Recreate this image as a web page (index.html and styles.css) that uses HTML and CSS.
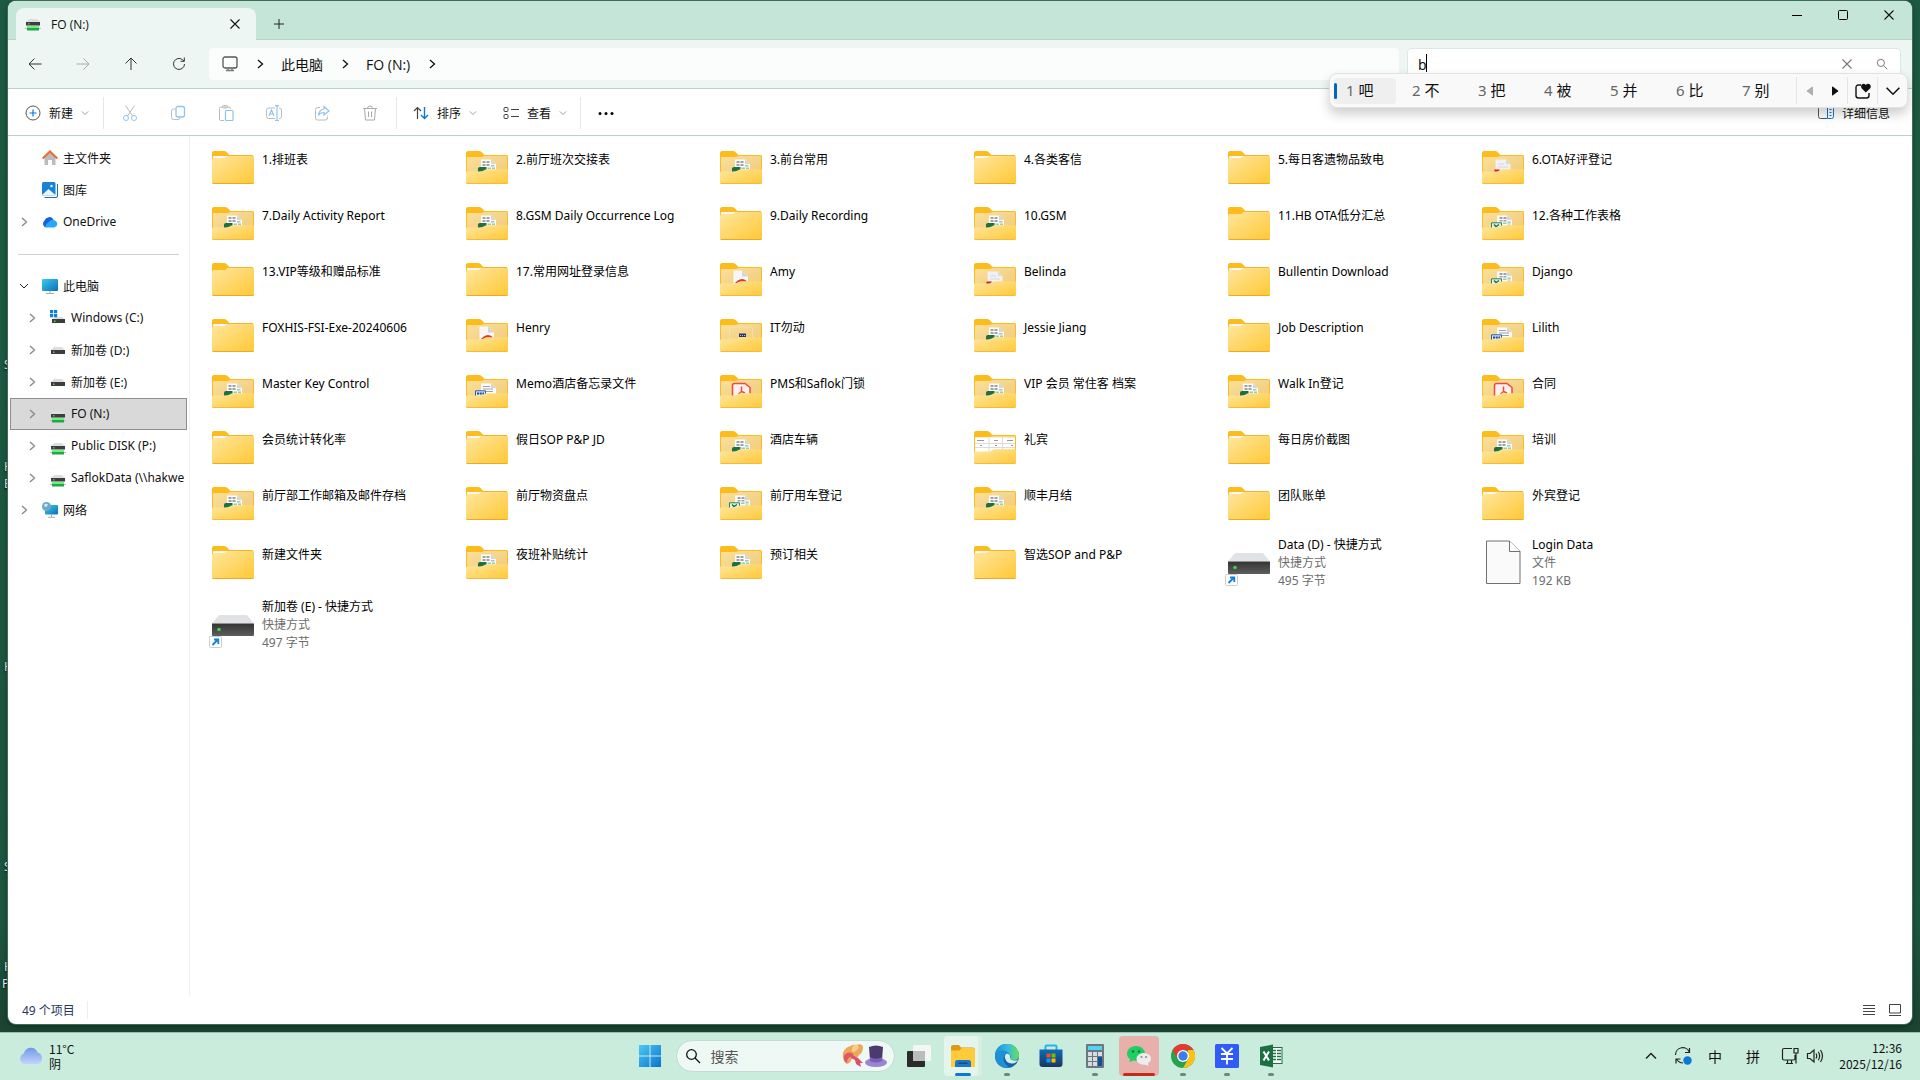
FILE: index.html
```html
<!DOCTYPE html>
<html lang="zh-CN">
<head>
    <meta charset="UTF-8">
    <meta name="viewport" content="width=device-width, initial-scale=1.0">
    <title>FO (N:)</title>
    <link rel="stylesheet" href="styles.css">
</head>
<body>
    <!-- Iconos compartidos -->
    <svg class="sprite" width="0" height="0" aria-hidden="true">
        <defs>
            <linearGradient id="gFolder" x1="0" y1="0" x2="1" y2="1">
                <stop offset="0" stop-color="#ffe79f"/><stop offset="1" stop-color="#ffc835"/>
            </linearGradient>
            <linearGradient id="gBack" x1="0" y1="0" x2="1" y2="1">
                <stop offset="0" stop-color="#fbdf9a"/><stop offset="1" stop-color="#efcb7c"/>
            </linearGradient>
            <linearGradient id="gDrive" x1="0" y1="0" x2="0" y2="1">
                <stop offset="0" stop-color="#333"/><stop offset="1" stop-color="#5e5e5e"/>
            </linearGradient>
            <linearGradient id="gBlue" x1="0" y1="0" x2="1" y2="1">
                <stop offset="0" stop-color="#35d0e8"/><stop offset="1" stop-color="#0f6cbd"/>
            </linearGradient>
            <linearGradient id="gWin" x1="0" y1="0" x2="1" y2="1">
                <stop offset="0" stop-color="#4cc8f5"/><stop offset="1" stop-color="#0a72d0"/>
            </linearGradient>
            <linearGradient id="gCloud" x1="0" y1="0" x2="0" y2="1">
                <stop offset="0" stop-color="#6f9be8"/><stop offset="1" stop-color="#c3d4fa"/>
            </linearGradient>
            <linearGradient id="gEdge" x1="0" y1="0" x2="1" y2="0">
                <stop offset="0" stop-color="#1c8fd8"/><stop offset=".55" stop-color="#35bde0"/><stop offset="1" stop-color="#6be04d"/>
            </linearGradient>
            <linearGradient id="gStore" x1="0" y1="0" x2="0" y2="1">
                <stop offset="0" stop-color="#0c6cb8"/><stop offset="1" stop-color="#1b3560"/>
            </linearGradient>
            <g id="back">
                <path d="M0 32V2Q0 0 2 0H13Q14.500 0 15.500 1L18.500 4H40.500Q42 4 42 5.500V32Z" fill="#fbbc1c"/>
                <path d="M1 7Q1 6 2 6H16Q18 5 19 5H40.500Q41 5 41 6V24H1Z" fill="url(#gBack)"/>
            </g>
            <g id="front">
                <path d="M0 21.500Q0 20.500 1 20.500H14Q16 20.500 17.500 19.500Q19.500 18.300 21.500 18.300H41Q42 18.300 42 19.500V31.500Q42 33 40.500 33H1.500Q0 33 0 31.500Z" fill="url(#gFolder)"/>
                <path d="M.7 32.500H41.300" stroke="#f0bb3f"/>
            </g>
            <g id="body">
                <path d="M0 20V2Q0 0 2 0H12Q13.500 0 14.500 1L17.500 4H30V20Z" fill="#fbbc1c"/>
                <path d="M0 9Q0 7 2 7H12Q14 7 15 5.500Q16 4.500 18 4.500H40.500Q42 4.500 42 6V31.500Q42 33 40.500 33H1.500Q0 33 0 31.500Z" fill="url(#gFolder)"/>
                <path d="M.7 32.500H41.300" stroke="#efa920"/><path d="M17 4.500H41" stroke="#efb530"/>
            </g>
            <g id="sheet">
                <path d="M15 8.500H25L30 13V22H15Z" fill="#fbfbfb"/><path d="M25 8.500L30 13H25Z" fill="#d5d5d5"/>
            </g>
        </defs>
        <symbol id="f-bare" viewBox="0 0 42 33"><use href="#body"/></symbol>
        <symbol id="f-plain" viewBox="0 0 42 33">
            <use href="#body"/><path d="M1 7.500V6Q1 5 2 5H15.500L14.500 6.200Q13.800 7 12 7H3Z" fill="#f4f6f8"/>
        </symbol>
        <symbol id="f-xls" viewBox="0 0 42 33">
            <use href="#back"/><use href="#sheet"/>
            <path d="M16.500 10h3v2h-3zM20.500 10h3v2h-3zM16.500 13h3v2h-3zM20.500 13h3v2h-3z" fill="#a2a2a2"/>
            <path d="M25 14h3.500v1.500H25zM21.500 16.500H25v1.500h-3.500zM26 16.500h3v1.500h-3z" fill="#9ccbb0"/>
            <path d="M12 21V17.500Q12 16 14 16H20.500V20Z" fill="#1d7044"/><use href="#front"/>
        </symbol>
        <symbol id="f-xls2" viewBox="0 0 42 33">
            <use href="#back"/><use href="#sheet"/>
            <path d="M17.500 10h3v2h-3zM21.500 10h3v2h-3zM17.500 13h3v1.500h-3zM21.500 13h3v1.500h-3z" fill="#a2a2a2"/>
            <path d="M21 15.500h3.500v1.500H21zM25.500 14.500h3v2h-3zM25.500 17.500h3v1h-3z" fill="#9ccbb0"/>
            <path d="M9.500 22V15.800H19.500V22" fill="#e6f3ec" stroke="#2d8257"/><path d="M12 17.500L14 19.500L17 17.500" fill="none" stroke="#1d7044" stroke-width="1.500"/>
            <use href="#front"/>
        </symbol>
        <symbol id="f-word" viewBox="0 0 42 33">
            <use href="#back"/><use href="#sheet"/>
            <path d="M17 11.500h7M17 14h10M19 16.500h8" stroke="#9aa3b1"/>
            <path d="M9.500 22V15.800H19.500V22" fill="#dbe7f7" stroke="#2b5aa8"/><path d="M11 18.500H18" stroke="#1d4a98" stroke-width="2" stroke-dasharray="2 .7"/>
            <use href="#front"/>
        </symbol>
        <symbol id="f-pdf" viewBox="0 0 42 33">
            <use href="#back"/><path d="M13.500 7.500H22L28 13.500V22H13.500Z" fill="#f7f7f7"/><path d="M22 7.500L28 13.500H22Z" fill="#d4d4d4"/>
            <path d="M16 20.500Q21 15 26 19" fill="none" stroke="#dc3a2f" stroke-width="2.500"/><use href="#front"/>
        </symbol>
        <symbol id="f-red" viewBox="0 0 42 33">
            <use href="#back"/><path d="M13.500 8.500H24L28.500 13V22H13.500Z" fill="#f1f1f4"/><path d="M24 8.500L28.500 13H24ZM16 12.500h6v1h-6zM16 15.500h10v1H16z" fill="#dadade"/>
            <path d="M12.500 21V18.500H18L16.500 21Z" fill="#d3202a"/><use href="#front"/>
        </symbol>
        <symbol id="f-adobe" viewBox="0 0 42 33">
            <use href="#back"/><path d="M12.500 22V10.500Q12.500 8.500 14.500 8.500H25L30 12.500V22" fill="#fff1ef" stroke="#ef4a3c" stroke-width="1.500"/>
            <path d="M21.500 11.500V16.500L25 18M21.500 16.500L18.500 19" fill="none" stroke="#ef4a3c" stroke-width="1.500"/><use href="#front"/>
        </symbol>
        <symbol id="f-it" viewBox="0 0 42 33">
            <use href="#back"/><path d="M9.500 8H32.500V20H9.500Z" fill="none" stroke="#f7dfa6"/><path d="M19 14.500H26V18H19Z" fill="#26366e"/><path d="M20 16.500h5" stroke="#b9c3e6" stroke-dasharray="1 1"/><use href="#front"/>
        </symbol>
        <symbol id="f-table" viewBox="0 0 42 33">
            <use href="#back"/><path d="M1 6.500H41V22H1Z" fill="#fff"/>
            <path d="M1 12.500H41M1 16.500H41M15 6.500V20M28.500 6.500V20" stroke="#dcdcde"/>
            <path d="M3 9.500h7M20 9.500h4M33 9.500h6M6 14.500h2M21 14.500h2M37 14.500h2" stroke="#999"/><use href="#front"/>
        </symbol>
        <symbol id="f-drive" viewBox="0 0 45 34">
            <path d="M10 1H38L45 9.500H3Z" fill="#e0e2e6"/><path d="M3 9.500H45V21Q45 22 44 22H4Q3 22 3 21Z" fill="url(#gDrive)"/>
            <circle cx="10" cy="15.500" r="1.800" fill="#3fd83a"/>
            <rect x=".5" y="22.500" width="12" height="11" rx="1" fill="#fff" stroke="#c8ced6"/>
            <path d="M3.500 31L9 25.500M5 25.500H9.300V30" fill="none" stroke="#1580d8" stroke-width="1.800"/>
        </symbol>
        <symbol id="f-file" viewBox="0 0 42 45">
            <path d="M4.500 1H27.500L38 11.500V43.500H4.500Z" fill="#fafafa" stroke="#707070"/><path d="M27.500 1V11.500H38" fill="#fff" stroke="#707070"/>
        </symbol>
        <symbol id="s-drive" viewBox="0 0 16 16">
            <path d="M4 5H12L15 8H1Z" fill="#dcdee2"/><rect x="1" y="8" width="14" height="4" fill="#3d3d3d"/><rect x="3" y="9.500" width="1.500" height="1.500" fill="#46e03e"/>
        </symbol>
        <symbol id="s-net" viewBox="0 0 16 16">
            <path d="M4 3H12L15 6H1Z" fill="#dcdee2"/><rect x="1" y="6" width="14" height="3.500" fill="#3d3d3d"/><rect x="3" y="7.200" width="1.500" height="1.200" fill="#46e03e"/>
            <path d="M0 12.500H16" stroke="#b9c4bd"/><rect x="2" y="10" width="12" height="2.500" fill="#6ff07a"/><rect x="2" y="12" width="12" height="2.500" fill="#22a648"/>
        </symbol>
        <symbol id="chev" viewBox="0 0 10 10"><path d="M3 1L7.500 5L3 9" fill="none" stroke="currentColor" stroke-width="1.300"/></symbol>
        <symbol id="down" viewBox="0 0 10 10"><path d="M1 3L5 7L9 3" fill="none" stroke="currentColor"/></symbol>
        <symbol id="cross" viewBox="0 0 12 12"><path d="M1.500 1.500L10.500 10.500M10.500 1.500L1.500 10.500" fill="none" stroke="currentColor" stroke-width="1.100"/></symbol>
        <symbol id="lens" viewBox="0 0 16 16"><g fill="none" stroke="currentColor" stroke-width="1.300"><circle cx="6.500" cy="6.500" r="4.800"/><path d="M10 10L15 15"/></g></symbol>
    </svg>

    <main class="desktop">
        <span class="desk-label label-1">S</span>
        <span class="desk-label label-2">H</span>
        <span class="desk-label label-3">E</span>
        <span class="desk-label label-4">H</span>
        <span class="desk-label label-5">S</span>
        <span class="desk-label label-6">H</span>
        <span class="desk-label label-7">P</span>

        <section class="window">
            <header class="titlebar">
                <div class="tab">
                    <svg class="icon16"><use href="#s-net"/></svg>
                    <span class="tab-title">FO (N:)</span>
                    <button class="tab-close" aria-label="关闭标签页"><svg class="icon12"><use href="#cross"/></svg></button>
                </div>
                <button class="tab-new" aria-label="新建标签页"><svg class="icon12" viewBox="0 0 12 12"><path d="M6 1V11M1 6H11" stroke="#222"/></svg></button>
                <div class="controls">
                    <button aria-label="最小化"><svg class="icon12" viewBox="0 0 12 12"><path d="M1 6.500H11" stroke="#000"/></svg></button>
                    <button aria-label="最大化"><svg class="icon12" viewBox="0 0 12 12"><rect x="1.500" y="1.500" width="9" height="9" rx="1" fill="none" stroke="#000"/></svg></button>
                    <button aria-label="关闭"><svg class="icon12"><use href="#cross"/></svg></button>
                </div>
            </header>

            <nav class="navbar">
                <button aria-label="后退"><svg class="icon16" viewBox="0 0 16 16"><path d="M14.500 8H2M7.500 2.500L2 8L7.500 13.500" fill="none" stroke="#333"/></svg></button>
                <button aria-label="前进"><svg class="icon16" viewBox="0 0 16 16"><path d="M1.500 8H14M8.500 2.500L14 8L8.500 13.500" fill="none" stroke="#aaa"/></svg></button>
                <button aria-label="向上"><svg class="icon16" viewBox="0 0 16 16"><path d="M8 14V2M2.500 7.500L8 2L13.500 7.500" fill="none" stroke="#333"/></svg></button>
                <button aria-label="刷新"><svg class="icon16" viewBox="0 0 16 16"><path d="M13.500 8A5.500 5.500 0 1 1 11.500 3.700L13.200 5.200M13.300 1.500V5.300H9.500" fill="none" stroke="#333"/></svg></button>
                <div class="address">
                    <svg class="icon16" viewBox="0 0 16 16"><rect x="1" y="1" width="14" height="11" rx="2" fill="none" stroke="#555" stroke-width="1.300"/><path d="M4 14.500H12M6 12V14M10 12V14" stroke="#777" stroke-width="1.300"/></svg>
                    <svg class="crumb-chev"><use href="#chev"/></svg>
                    <a href="#">此电脑</a>
                    <svg class="crumb-chev"><use href="#chev"/></svg>
                    <a href="#">FO (N:)</a>
                    <svg class="crumb-chev"><use href="#chev"/></svg>
                </div>
                <div class="search">
                    <input type="text" value="b" aria-label="搜索 FO (N:)">
                    <span class="caret"></span>
                    <button aria-label="清除"><svg class="icon12"><use href="#cross"/></svg></button>
                    <button aria-label="搜索"><svg class="icon12"><use href="#lens"/></svg></button>
                </div>
            </nav>

            <div class="toolbar">
                <button class="cmd cmd-new"><svg class="icon16" viewBox="0 0 16 16"><circle cx="8" cy="8" r="7" fill="none" stroke="#555"/><path d="M8 4.500V11.500M4.500 8H11.500" stroke="#0a78d6" stroke-width="1.200"/></svg>新建<svg class="arrow"><use href="#down"/></svg></button>
                <span class="divider"></span>
                <div class="tools">
                    <button class="tool" aria-label="剪切"><svg class="icon16" viewBox="0 0 16 16" fill="none"><path d="M3.500 0.500L10.500 11M12.500 0.500L5.500 11" stroke="#bbb"/><circle cx="4" cy="13" r="2.500" stroke="#8fc4ee"/><circle cx="12" cy="13" r="2.500" stroke="#8fc4ee"/></svg></button>
                    <button class="tool" aria-label="复制"><svg class="icon16" viewBox="0 0 16 16" fill="none"><path d="M5 4H3.500Q1.500 4 1.500 6V12.500Q1.500 14.500 3.500 14.500H8Q10 14.500 10 12.500" stroke="#bbb"/><rect x="6" y="1.500" width="8.500" height="10.500" rx="2" stroke="#8fc4ee" stroke-width="1.300"/></svg></button>
                    <button class="tool" aria-label="粘贴"><svg class="icon16" viewBox="0 0 16 16" fill="none"><path d="M6 15.500H3Q1.500 15.500 1.500 14V3.500Q1.500 2 3 2H11Q12.500 2 12.500 3.500V4" stroke="#bbb"/><rect x="4.500" y=".5" width="5" height="2.500" rx="1" stroke="#bbb"/><rect x="7.500" y="5.500" width="7.500" height="10" rx="1" stroke="#8fc4ee" stroke-width="1.200"/></svg></button>
                    <button class="tool" aria-label="重命名"><svg class="icon16" viewBox="0 0 16 16" fill="none"><path d="M9 3H2.500Q.5 3 .5 5V11.500Q.5 13.500 2.500 13.500H9M13 3Q15.500 3 15.500 5V11.500Q15.500 13.500 13 13.500" stroke="#bbb"/><path d="M11 1V15.500M9 .7H13M9 15.500H13M3 11L5.500 5L8 11M4 9H7" stroke="#8fc4ee" stroke-width="1.200"/></svg></button>
                    <button class="tool" aria-label="共享"><svg class="icon16" viewBox="0 0 16 16" fill="none"><path d="M6 2.500H3.500Q1.500 2.500 1.500 4.500V13Q1.500 15 3.500 15H11.500Q13.500 15 13.500 13V11.500" stroke="#bbb"/><path d="M10 1.500L15 6L10 10V7.500Q6 7.500 4.500 10.500Q5 4.500 10 4Z" stroke="#8fc4ee" stroke-width="1.200"/></svg></button>
                    <button class="tool" aria-label="删除"><svg class="icon16" viewBox="0 0 16 16" fill="none"><path d="M1 3.500H15M5.500 3.500Q5.500 1 8 1T10.500 3.500M2.500 3.500L3.500 15H12.500L13.500 3.500M6.500 6.500V12M9.500 6.500V12" stroke="#aaa"/></svg></button>
                </div>
                <span class="divider"></span>
                <div class="views">
                    <button class="cmd"><svg class="icon16" viewBox="0 0 16 16" fill="none"><path d="M4.500 14V2.500M1 6L4.500 2.500L8 6" stroke="#444" stroke-width="1.200"/><path d="M11.500 2V13.500M8 10L11.500 13.500L15 10" stroke="#0a78d6" stroke-width="1.400"/></svg>排序<svg class="arrow"><use href="#down"/></svg></button>
                    <button class="cmd"><svg class="icon16" viewBox="0 0 16 16" fill="none" stroke="#444"><rect x="1" y="2.500" width="4" height="4" rx="1"/><rect x="1" y="9.500" width="4" height="4" rx="1"/><path d="M8 4.500H16M8 11.500H16"/></svg>查看<svg class="arrow"><use href="#down"/></svg></button>
                </div>
                <span class="divider"></span>
                <button class="more" aria-label="查看更多"><svg class="icon16" viewBox="0 0 16 16"><circle cx="2" cy="8.500" r="1.500"/><circle cx="8" cy="8.500" r="1.500"/><circle cx="14" cy="8.500" r="1.500"/></svg></button>
                <button class="cmd details"><svg class="icon16" viewBox="0 0 16 16" fill="none"><path d="M9 1.500H2.500Q.5 1.500 .5 3.500V11.500Q.5 13.500 2.500 13.500H9" stroke="#555"/><path d="M9.500 1.500H13.500Q15.500 1.500 15.500 3.500V11.500Q15.500 13.500 13.500 13.500H9.500ZM11.500 4.500H13.500M11.500 7.500H13.500M11.500 10.500H13.500" stroke="#0a78d6"/></svg>详细信息</button>
            </div>

            <div class="content">
                <aside class="sidebar">
                    <a href="#" class="side-item"><span class="side-chev"></span><svg class="icon16" viewBox="0 0 16 16"><path d="M2.500 7L8 2L13.500 7V15H10V10H6V15H2.500Z" fill="#b9bbbe"/><path d="M.7 8.500L8 1.500L15.300 8.500" fill="none" stroke="#e8702a" stroke-width="2"/></svg><span>主文件夹</span></a>
                    <a href="#" class="side-item"><span class="side-chev"></span><svg class="icon16" viewBox="0 0 16 16"><path d="M2.500 15.500H14Q15.500 15.500 15.500 14V2" fill="none" stroke="#1b6fc0"/><rect width="13.500" height="13.500" rx="1.500" fill="#1683d8"/><path d="M0 13L6.500 7L13.500 13Q13 13.500 12 13.500H1.500Z" fill="#eef6fd"/><circle cx="9.500" cy="4" r="1.200" fill="#fff"/></svg><span>图库</span></a>
                    <a href="#" class="side-item"><svg class="side-chev"><use href="#chev"/></svg><svg class="icon16" viewBox="0 0 16 16"><path d="M4 13.500A4 4 0 0 1 2.500 6.500A5 5 0 0 1 11.500 5.500L7 12Z" fill="#1664d6"/><path d="M5 13.500Q3 13 4 10.500L8.500 6.500Q10.500 5 13 6.500A3.700 3.700 0 0 1 12.500 13.500Z" fill="#27a9f5"/></svg><span>OneDrive</span></a>
                    <hr>
                    <a href="#" class="side-item open"><svg class="side-chev"><use href="#down"/></svg><svg class="icon16" viewBox="0 0 16 16"><rect y="1" width="16" height="12" rx="1" fill="url(#gBlue)"/><path d="M4 15.500H12M8 13V15.500" stroke="#a3abb3"/></svg><span>此电脑</span></a>
                    <a href="#" class="side-item child"><svg class="side-chev"><use href="#chev"/></svg><svg class="icon16" viewBox="0 0 16 16"><path d="M5 7H12L15 9.500H2Z" fill="#dcdee2"/><rect x="2" y="9" width="13" height="4" fill="#3d3d3d"/><rect x="4" y="10.500" width="1.500" height="1.500" fill="#46e03e"/><path d="M0 0h3.200v3.200H0zM4 0h3.200v3.200H4zM0 4h3.200v3.200H0zM4 4h3.200v3.200H4z" fill="#0a7ed9"/></svg><span>Windows (C:)</span></a>
                    <a href="#" class="side-item child"><svg class="side-chev"><use href="#chev"/></svg><svg class="icon16"><use href="#s-drive"/></svg><span>新加卷 (D:)</span></a>
                    <a href="#" class="side-item child"><svg class="side-chev"><use href="#chev"/></svg><svg class="icon16"><use href="#s-drive"/></svg><span>新加卷 (E:)</span></a>
                    <a href="#" class="side-item child selected"><svg class="side-chev"><use href="#chev"/></svg><svg class="icon16 net"><use href="#s-net"/></svg><span>FO (N:)</span></a>
                    <a href="#" class="side-item child"><svg class="side-chev"><use href="#chev"/></svg><svg class="icon16 net"><use href="#s-net"/></svg><span>Public DISK (P:)</span></a>
                    <a href="#" class="side-item child"><svg class="side-chev"><use href="#chev"/></svg><svg class="icon16 net"><use href="#s-net"/></svg><span>SaflokData (\\hakwe</span></a>
                    <a href="#" class="side-item"><svg class="side-chev"><use href="#chev"/></svg><svg class="icon16" viewBox="0 0 16 16"><rect x="3" y="3" width="13" height="9.500" rx="1" fill="url(#gBlue)"/><path d="M6 15.300H13M9.500 12.500V15" stroke="#a3abb3"/><circle cx="4.500" cy="4.500" r="4.500" fill="#6fa9c9"/><path d="M2 3Q4 1 6 2.500Q5 5 3 5Z" fill="#d7eaf3"/></svg><span>网络</span></a>
                </aside>

                <ul class="files">
                    <li><svg class="folder"><use href="#f-plain"/></svg><p>1.排班表</p></li>
                    <li><svg class="folder"><use href="#f-xls"/></svg><p>2.前厅班次交接表</p></li>
                    <li><svg class="folder"><use href="#f-xls"/></svg><p>3.前台常用</p></li>
                    <li><svg class="folder"><use href="#f-plain"/></svg><p>4.各类客信</p></li>
                    <li><svg class="folder"><use href="#f-plain"/></svg><p>5.每日客遗物品致电</p></li>
                    <li><svg class="folder"><use href="#f-red"/></svg><p>6.OTA好评登记</p></li>
                    <li><svg class="folder"><use href="#f-xls"/></svg><p>7.Daily Activity Report</p></li>
                    <li><svg class="folder"><use href="#f-xls"/></svg><p>8.GSM Daily Occurrence Log</p></li>
                    <li><svg class="folder"><use href="#f-plain"/></svg><p>9.Daily Recording</p></li>
                    <li><svg class="folder"><use href="#f-xls"/></svg><p>10.GSM</p></li>
                    <li><svg class="folder"><use href="#f-bare"/></svg><p>11.HB OTA低分汇总</p></li>
                    <li><svg class="folder"><use href="#f-xls2"/></svg><p>12.各种工作表格</p></li>
                    <li><svg class="folder"><use href="#f-bare"/></svg><p>13.VIP等级和赠品标准</p></li>
                    <li><svg class="folder"><use href="#f-plain"/></svg><p>17.常用网址登录信息</p></li>
                    <li><svg class="folder"><use href="#f-pdf"/></svg><p>Amy</p></li>
                    <li><svg class="folder"><use href="#f-red"/></svg><p>Belinda</p></li>
                    <li><svg class="folder"><use href="#f-plain"/></svg><p>Bullentin Download</p></li>
                    <li><svg class="folder"><use href="#f-xls2"/></svg><p>Django</p></li>
                    <li><svg class="folder"><use href="#f-plain"/></svg><p>FOXHIS-FSI-Exe-20240606</p></li>
                    <li><svg class="folder"><use href="#f-pdf"/></svg><p>Henry</p></li>
                    <li><svg class="folder"><use href="#f-it"/></svg><p>IT勿动</p></li>
                    <li><svg class="folder"><use href="#f-xls"/></svg><p>Jessie Jiang</p></li>
                    <li><svg class="folder"><use href="#f-plain"/></svg><p>Job Description</p></li>
                    <li><svg class="folder"><use href="#f-word"/></svg><p>Lilith</p></li>
                    <li><svg class="folder"><use href="#f-xls"/></svg><p>Master Key Control</p></li>
                    <li><svg class="folder"><use href="#f-word"/></svg><p>Memo酒店备忘录文件</p></li>
                    <li><svg class="folder"><use href="#f-adobe"/></svg><p>PMS和Saflok门锁</p></li>
                    <li><svg class="folder"><use href="#f-xls"/></svg><p>VIP 会员 常住客 档案</p></li>
                    <li><svg class="folder"><use href="#f-xls"/></svg><p>Walk In登记</p></li>
                    <li><svg class="folder"><use href="#f-adobe"/></svg><p>合同</p></li>
                    <li><svg class="folder"><use href="#f-plain"/></svg><p>会员统计转化率</p></li>
                    <li><svg class="folder"><use href="#f-plain"/></svg><p>假日SOP P&amp;P JD</p></li>
                    <li><svg class="folder"><use href="#f-xls"/></svg><p>酒店车辆</p></li>
                    <li><svg class="folder"><use href="#f-table"/></svg><p>礼宾</p></li>
                    <li><svg class="folder"><use href="#f-plain"/></svg><p>每日房价截图</p></li>
                    <li><svg class="folder"><use href="#f-xls"/></svg><p>培训</p></li>
                    <li><svg class="folder"><use href="#f-xls"/></svg><p>前厅部工作邮箱及邮件存档</p></li>
                    <li><svg class="folder"><use href="#f-plain"/></svg><p>前厅物资盘点</p></li>
                    <li><svg class="folder"><use href="#f-xls2"/></svg><p>前厅用车登记</p></li>
                    <li><svg class="folder"><use href="#f-xls"/></svg><p>顺丰月结</p></li>
                    <li><svg class="folder"><use href="#f-plain"/></svg><p>团队账单</p></li>
                    <li><svg class="folder"><use href="#f-plain"/></svg><p>外宾登记</p></li>
                    <li><svg class="folder"><use href="#f-plain"/></svg><p>新建文件夹</p></li>
                    <li><svg class="folder"><use href="#f-xls"/></svg><p>夜班补贴统计</p></li>
                    <li><svg class="folder"><use href="#f-xls"/></svg><p>预订相关</p></li>
                    <li><svg class="folder"><use href="#f-plain"/></svg><p>智选SOP and P&amp;P</p></li>
                    <li class="tall"><svg class="drive"><use href="#f-drive"/></svg><p>Data (D) - 快捷方式<small>快捷方式</small><small>495 字节</small></p></li>
                    <li class="tall"><svg class="file"><use href="#f-file"/></svg><p>Login Data<small>文件</small><small>192 KB</small></p></li>
                    <li class="tall"><svg class="drive"><use href="#f-drive"/></svg><p>新加卷 (E) - 快捷方式<small>快捷方式</small><small>497 字节</small></p></li>
                </ul>
            </div>

            <footer class="statusbar">
                <span class="count">49 个项目</span>
                <button aria-label="详细信息视图"><svg class="icon12" viewBox="0 0 12 12"><path d="M0 1.500H12M0 4.500H12M0 7.500H12M0 10.500H12" stroke="#444"/></svg></button>
                <button aria-label="大图标视图"><svg class="icon12" viewBox="0 0 12 12"><path d="M.5 .5H11.500V9H.5ZM0 11.500H12" fill="none" stroke="#444"/></svg></button>
            </footer>
        </section>

        <!-- Candidatos del teclado -->
        <div class="ime">
            <button class="cand active"><i>1</i> 吧</button>
            <button class="cand"><i>2</i> 不</button>
            <button class="cand"><i>3</i> 把</button>
            <button class="cand"><i>4</i> 被</button>
            <button class="cand"><i>5</i> 并</button>
            <button class="cand"><i>6</i> 比</button>
            <button class="cand"><i>7</i> 别</button>
            <span class="ime-sep"></span>
            <button class="ime-btn" aria-label="上一页"><svg class="icon12" viewBox="0 0 12 12"><path d="M9 2V10Q9 11 8 10.300L3 6.500Q2.500 6 3 5.500L8 1.700Q9 1 9 2Z" fill="#b0b0b0"/></svg></button>
            <button class="ime-btn" aria-label="下一页"><svg class="icon12" viewBox="0 0 12 12"><path d="M3 2V10Q3 11 4 10.300L9 6.500Q9.500 6 9 5.500L4 1.700Q3 1 3 2Z" fill="#111"/></svg></button>
            <span class="ime-sep"></span>
            <button class="ime-heart" aria-label="表情"><svg class="icon16" viewBox="0 0 16 16"><path d="M6 2H3.500Q1 2 1 4.500V12.500Q1 15 3.500 15H11.500Q14 15 14 12.500V10" fill="none" stroke="#111" stroke-width="1.400"/><path d="M10.800 9.500L6.800 5.500Q5.300 3.500 6.800 1.500Q9 -.2 10.800 2Q12.800 -.2 15 1.500Q16.500 3.500 15 5.500Z" fill="#111"/></svg></button>
            <span class="ime-sep"></span>
            <button class="ime-more" aria-label="展开"><svg class="icon16"><use href="#down"/></svg></button>
        </div>
    </main>

    <footer class="taskbar">
        <button class="weather">
            <svg class="icon26" viewBox="0 0 26 26"><path d="M6 21A5.500 5.500 0 0 1 6 10.500A7 7 0 0 1 19.500 9.500A6 6 0 0 1 20 21Z" fill="url(#gCloud)"/></svg>
            <span>11°C<br>阴</span>
        </button>

        <div class="apps">
            <button class="app" aria-label="开始"><svg class="icon24" viewBox="0 0 24 24"><path d="M1 1h10.500v10.500H1zM12.500 1H23v10.500H12.500zM1 12.500h10.500V23H1zM12.500 12.500H23V23H12.500z" fill="url(#gWin)"/></svg></button>
            <button class="task-search">
                <svg class="icon16"><use href="#lens"/></svg>
                <span>搜索</span>
                <svg class="hats" viewBox="0 0 46 24">
                    <path d="M1 9Q3 3 9 2Q10 0 14 1Q20 -1 21 3Q21 9 17 11Q15 15 10 14Q9 19 5 20Q0 17 1 9Z" fill="#eba85a"/><path d="M12 1Q16 0 17 3Q15 8 10 8Q9 4 12 1Z" fill="#f7cd88"/>
                    <path d="M2 12Q4 8 9 8.500L12 11L9 13Q5 13 5 19Q1 17 2 12Z" fill="#e0566a"/><path d="M10 11L16 14L21 19L18 19L19 23L14 20L13 16L9 14Z" fill="#dd4f6a"/>
                    <ellipse cx="34" cy="18.500" rx="11" ry="4.500" fill="#9a86d0"/><path d="M27 3Q34 0 41 3L40 16Q34 20 28 16Z" fill="#4b3a6e"/><path d="M28 13Q34 16.500 40.300 13L40 17Q34 20 28 17Z" fill="#7a5fb8"/>
                </svg>
            </button>
            <button class="app" aria-label="任务视图"><svg class="icon24" viewBox="0 0 24 24"><rect x="6" y="1" width="18" height="16" rx="1" fill="#f5f5f5"/><rect y="7" width="18" height="16" rx="1" fill="#2b2b2b"/><rect x="6" y="7" width="12" height="10" fill="#b9bdbb"/></svg></button>
            <button class="app current" aria-label="文件资源管理器"><svg class="icon24" viewBox="0 0 24 24"><path d="M0 3Q0 1 2 1H8L10 3.500H22Q24 3.500 24 5V12H0Z" fill="#dd9a12"/><path d="M0 6.500H8L11 4H22.500Q24 4 24 5.500V23H0Z" fill="#ffcb3d"/><path d="M4 23V18.500Q4 16 6.500 16H17.500Q20 16 20 18.500V23Z" fill="#1976c9"/><rect x="7.500" y="18.500" width="9" height="1.500" fill="#0b4f94"/></svg></button>
            <button class="app running" aria-label="Edge"><svg class="icon24" viewBox="0 0 24 24"><circle cx="12" cy="12" r="12" fill="#1260ae"/><path d="M0 12A12 12 0 0 1 24 11Q24 16 19 16Q15 16 15 14Q16.500 12.500 15 10.500Q12 7 7 8.500Q3 9.500 0 13Z" fill="url(#gEdge)"/><path d="M0 12Q1 6.500 8 6.500Q12 6.500 14 9Q9 9.500 8.500 14Q8.500 20 15 23.500Q1 25 0 12Z" fill="#1e90d6"/><path d="M10 14Q9 11 12 9.500Q16 10 15 13.500Q15 16.500 20 16.500Q22 16.500 23 15.500Q21 20 16.500 19.500Q11 19 10 14Z" fill="#d2efe2"/></svg></button>
            <button class="app" aria-label="Microsoft Store"><svg class="icon24" viewBox="0 0 24 24"><path d="M6.500 6V2.500Q6.500 1.500 7.500 1.500H16.500Q17.500 1.500 17.500 2.500V6" fill="none" stroke="#22b5ef" stroke-width="2"/><path d="M.5 5.500H23.500V20Q23.500 23 20.500 23H3.500Q.5 23 .5 20Z" fill="url(#gStore)"/><path d="M7.500 9.500h4v4h-4z" fill="#f25022"/><path d="M12.500 9.500h4v4h-4z" fill="#7fba00"/><path d="M7.500 14.500h4v4h-4z" fill="#00a4ef"/><path d="M12.500 14.500h4v4h-4z" fill="#ffb900"/></svg></button>
            <button class="app running" aria-label="计算器"><svg class="icon24" viewBox="0 0 24 24"><rect x="3" width="18" height="24" rx="1" fill="#6d7780"/><rect x="5" y="2" width="14" height="4" fill="#52d2f5"/><path d="M5 8h4v4H5zM10 8h4v4h-4zM15 8h4v4h-4zM5 13h4v4H5zM10 13h4v4h-4zM5 18h4v4H5zM10 18h4v4h-4z" fill="#d7dce0"/><path d="M15 13h4v9h-4z" fill="#124f94"/></svg></button>
            <button class="app alert" aria-label="微信"><svg class="icon24" viewBox="0 0 24 24"><path d="M9 2C4 2 0 5.500 0 9.500Q0 13 3 15L2.500 18L6 16.500Q17 18 18 9.500C18 5.500 14 2 9 2Z" fill="#1fcf64"/><circle cx="6" cy="7.500" r="1.200" fill="#0b7a37"/><circle cx="12" cy="7.500" r="1.200" fill="#0b7a37"/><path d="M17 9C13 9 9.500 11.500 9.500 15Q10 21 18.500 20.800L21.500 22L21 19.500Q24 17.500 24 15C24 11.500 21 9 17 9Z" fill="#ececec"/><circle cx="14.500" cy="13" r="1" fill="#888"/><circle cx="19" cy="13" r="1" fill="#888"/></svg></button>
            <button class="app running" aria-label="Chrome"><svg class="icon24" viewBox="0 0 24 24"><circle cx="12" cy="12" r="12" fill="#2aa14b"/><path d="M1.600 6A12 12 0 0 1 22.400 6H12L7 15Z" fill="#e33b2e"/><path d="M22.400 6A12 12 0 0 1 12 24L17.200 15L17 6Z" fill="#fbc116"/><circle cx="12" cy="12" r="6" fill="#fff"/><circle cx="12" cy="12" r="4.700" fill="#3b7ded"/></svg></button>
            <button class="app running" aria-label="财务"><svg class="icon24" viewBox="0 0 24 24"><rect width="24" height="24" rx="1.500" fill="#2f5cf6"/><path d="M6.500 4L12 9.500L17.500 4M6 10H18M6 15H18M12 10V20.500" fill="none" stroke="#fff" stroke-width="1.800"/></svg></button>
            <button class="app running" aria-label="Excel"><svg class="icon24" viewBox="0 0 24 24"><rect x="12" y="3.500" width="11" height="16" fill="#fff" stroke="#1d7044"/><path d="M14 6.500h3M18 6.500h4M14 9.500h3M18 9.500h4M14 12.500h3M18 12.500h4M14 15.500h3M18 15.500h4" stroke="#1d7044" stroke-width="1.500"/><path d="M1 3L14 .5V23.500L1 21Z" fill="#1d7044"/><path d="M4.500 7.500L10 16.500M10 7.500L4.500 16.500" stroke="#fff" stroke-width="2"/></svg></button>
        </div>

        <div class="tray">
            <button class="tray-btn" aria-label="显示隐藏的图标"><svg class="icon12" viewBox="0 0 12 12"><path d="M1 8.500L6 3.500L11 8.500" fill="none" stroke="#222" stroke-width="1.500"/></svg></button>
            <button class="tray-btn" aria-label="更新"><svg class="icon18" viewBox="0 0 18 18"><path d="M1.500 8A7.200 7.200 0 0 1 15.500 5.500M15.500 1V5.500H11M2 16.500V12H6.500M2.500 12Q5 16 9 16" fill="none" stroke="#222" stroke-width="1.200"/><circle cx="13.500" cy="13.500" r="4.200" fill="#0a78d6"/></svg></button>
            <button class="tray-btn">中</button>
            <button class="tray-btn wide">拼</button>
            <button class="tray-status" aria-label="网络和音量"><svg class="icon18" viewBox="0 0 18 18" fill="none" stroke="#222" stroke-width="1.200"><path d="M11 1.500H3Q1.500 1.500 1.500 3V11.500Q1.500 13 3 13H12.500Q14 13 14 11.500V8M5 16.500H12M6.500 13V16M10.500 13V16M13 1.500H17V6H13ZM15 6V16.500"/></svg><svg class="icon18" viewBox="0 0 18 18" fill="none" stroke="#222" stroke-width="1.200"><path d="M1.500 6.500H4L8 3V15L4 11.500H1.500ZM10 6.500Q11.500 9 10 11.500M12.300 4.800Q15 9 12.300 13.200M14.500 3Q18.500 9 14.500 15"/></svg></button>
            <button class="clock">12:36<br>2025/12/16</button>
        </div>
    </footer>
</body>
</html>
```

FILE: styles.css
```css
* {
    box-sizing: border-box;
}
body {
    margin: 0;
    height: 100vh;
    display: flex;
    flex-direction: column;
    overflow: hidden;
    background: #1d5540;
    color: #111;
    font-family: "Noto Sans", "Noto Sans CJK SC", sans-serif;
    font-size: 12px;
}
button {
    border: none;
    background: none;
    padding: 0;
    color: inherit;
    font: inherit;
    display: flex;
    align-items: center;
    justify-content: center;
}
a {
    color: inherit;
    text-decoration: none;
}
svg {
    display: block;
    flex: none;
}
.icon12 { width: 12px; height: 12px; }
.icon16 { width: 16px; height: 16px; }
.icon18 { width: 18px; height: 18px; }
.icon24 { width: 24px; height: 24px; }
.icon26 { width: 26px; height: 26px; }

/* Escritorio */
.desktop {
    flex: 1;
    min-height: 0;
    display: flex;
    position: relative;
    padding: 1px 8px 8px;
    background: linear-gradient(#1d5a43, #1d5540 90%, #1b4532 99%);
}
.desk-label {
    position: absolute;
    left: 4px;
    color: #e8f3ff;
    line-height: 16px;
    text-shadow: 0 1px 2px #000;
}
.label-1 { top: 357px; }
.label-2 { top: 459px; }
.label-3 { top: 476px; }
.label-4 { top: 659px; }
.label-5 { top: 859px; }
.label-6 { top: 959px; }
.label-7 { top: 976px; left: 2px; }

.window {
    flex: 1;
    min-width: 0;
    display: flex;
    flex-direction: column;
    position: relative;
    overflow: hidden;
    background: #fff;
    border-radius: 8px;
    box-shadow: 0 0 0 1px #3f6d5b, 0 2px 6px rgba(0, 0, 0, 0.4);
}

/* Barra de título */
.titlebar {
    display: flex;
    height: 39px;
    padding: 7px 0 0 8px;
    background: #c6e5d9;
    border-bottom: 1px solid #b4d5c8;
}
.tab {
    display: flex;
    align-items: center;
    width: 240px;
    height: 32px;
    padding: 0 15px 0 9px;
    background: #edf6f3;
    border-radius: 8px 8px 0 0;
}
.tab-title {
    flex: 1;
    padding-left: 10px;
    font-family: "Open Sans", "Noto Sans CJK SC", sans-serif;
}
.tab-new {
    width: 46px;
    height: 32px;
}
.controls {
    display: flex;
    margin-left: auto;
    height: 14px;
}
.controls button {
    width: 46px;
}

/* Navegación */
.navbar {
    display: flex;
    align-items: center;
    height: 49px;
    padding: 0 11px 0 3px;
    background: #edf6f3;
    border-bottom: 1px solid #b4d5c8;
    font-size: 14px;
}
.navbar > button {
    width: 48px;
    height: 32px;
}
.address {
    flex: 1;
    display: flex;
    align-items: center;
    height: 32px;
    margin: 0 8px 0 6px;
    padding-left: 13px;
    background: #fafdfc;
    border-radius: 4px;
    font-family: "Open Sans", "Noto Sans CJK SC", sans-serif;
}
.crumb-chev {
    width: 10px;
    height: 10px;
    margin: 0 16px 0 17px;
}
.search {
    display: flex;
    align-items: center;
    position: relative;
    width: 494px;
    height: 32px;
    padding: 0 1px 0 10px;
    background: #fff;
    border: 1px solid #dde8e4;
    border-radius: 4px;
    color: #777;
}
.search input {
    flex: 1;
    min-width: 0;
    border: none;
    outline: none;
    padding: 0;
    color: #111;
    font: inherit;
    background: none;
}
.search button {
    width: 35px;
    height: 28px;
}
.caret {
    position: absolute;
    left: 18px;
    top: 5px;
    width: 1px;
    height: 18px;
    background: #000;
}

/* Comandos */
.toolbar {
    display: flex;
    align-items: center;
    height: 47px;
    padding-top: 2px;
    background: #fff;
    border-bottom: 1px solid #b4d5c8;
}
.cmd {
    gap: 8px;
    height: 32px;
    padding: 0 12px;
}
.cmd-new {
    padding-left: 17px;
    margin-right: 2px;
}
.arrow {
    width: 8px;
    height: 8px;
    color: #888;
}
.divider {
    width: 1px;
    height: 32px;
    background: #e5e8e7;
}
.tools {
    display: flex;
    padding: 0 2px;
}
.tool {
    width: 48px;
    height: 32px;
}
.views {
    display: flex;
    gap: 2px;
    padding: 0 1px 0 4px;
}
.more {
    width: 50px;
    height: 32px;
}
.details {
    margin-left: auto;
    padding-right: 22px;
}

/* Contenido */
.content {
    flex: 1;
    min-height: 0;
    display: flex;
}
.sidebar {
    width: 182px;
    flex: none;
    padding: 6px 2px 0;
    border-right: 1px solid #f2f2f2;
}
.side-item {
    display: flex;
    align-items: center;
    width: 177px;
    height: 32px;
    padding: 0 0 1px 8px;
    border: 1px solid transparent;
    overflow: hidden;
    white-space: nowrap;
}
.side-item span:last-child {
    padding-left: 5px;
}
.side-chev {
    width: 10px;
    height: 10px;
    margin-right: 13px;
    color: #888;
}
.child {
    padding-left: 16px;
}
.net {
    margin-top: 4px;
}
.open .side-chev {
    color: #222;
}
.selected {
    background: #d9d9d9;
    border-color: #8f8f8f;
}
.sidebar hr {
    height: 1px;
    margin: 16px 8px 15px;
    border: none;
    background: #d0d0d0;
}
.files {
    flex: 1;
    display: grid;
    grid-template-columns: repeat(auto-fill, 254px);
    align-content: start;
    margin: 0;
    padding: 3px 0 0 14px;
    list-style: none;
    color: #000;
}
.files li {
    display: flex;
    align-items: center;
    min-height: 56px;
    padding-left: 8px;
}
.files p {
    margin: 0;
    min-height: 36px;
    padding: 2px 0 0 8px;
    line-height: 18px;
    white-space: nowrap;
}
.files small {
    display: block;
    font-size: 12px;
    color: #6d6d6d;
}
.files .tall {
    min-height: 62px;
}
.folder {
    width: 42px;
    height: 33px;
}
.drive {
    width: 45px;
    height: 34px;
    margin-left: -3px;
    margin-top: 14px;
}
.file {
    width: 42px;
    height: 45px;
}

/* Barra de estado */
.statusbar {
    display: flex;
    align-items: center;
    height: 28px;
    padding: 0 4px 0 14px;
    color: #1e395b;
}
.count {
    margin-right: auto;
    padding-right: 12px;
    border-right: 1px solid #eee;
}
.statusbar button {
    width: 26px;
    height: 24px;
}

/* Candidatos */
.ime {
    position: absolute;
    top: 73px;
    right: 12px;
    display: flex;
    align-items: center;
    height: 35px;
    padding: 0 0 0 4px;
    background: #f9f9f9;
    border: 1px solid #e2e2e2;
    border-radius: 8px;
    box-shadow: 0 6px 12px rgba(0, 0, 0, 0.2);
    font-size: 15px;
}
.cand {
    position: relative;
    justify-content: flex-start;
    gap: 4px;
    width: 62px;
    height: 26px;
    margin-right: 4px;
    padding: 0 0 2px 12px;
    border-radius: 4px;
}
.cand i {
    font-style: normal;
    color: #666;
}
.active {
    background: #efefef;
}
.active::before {
    content: "";
    position: absolute;
    left: 0;
    top: 5px;
    width: 3px;
    height: 16px;
    border-radius: 2px;
    background: #0067c0;
}
.ime-sep {
    width: 1px;
    height: 27px;
    background: #e5e5e5;
}
.ime-btn {
    width: 25px;
    height: 26px;
}
.ime-heart,
.ime-more {
    width: 29px;
    height: 26px;
}

/* Barra de tareas */
.taskbar {
    display: grid;
    grid-template-columns: 1fr auto 1fr;
    align-items: center;
    height: 48px;
    padding-bottom: 2px;
    background: #c9ecdd;
    border-top: 1px solid #9dbdaf;
}
.weather {
    justify-self: start;
    gap: 5px;
    padding-left: 18px;
    line-height: 15px;
    text-align: left;
    font-family: "Noto Sans CJK SC", sans-serif;
}
.apps {
    display: flex;
    align-items: center;
}
.app {
    position: relative;
    width: 44px;
    height: 40px;
}
.app::after {
    content: "";
    position: absolute;
    bottom: 0;
    left: 19px;
    width: 6px;
    height: 3px;
    border-radius: 2px;
}
.running::after {
    background: #71877d;
}
.current {
    width: 38px;
    margin: 0 3px;
    background: #e4f5ee;
    border-radius: 4px;
    box-shadow: inset -4px 0 0 #d5efe4;
}
.current::after {
    left: 11px;
    width: 16px;
    background: #0a78d6;
}
.alert {
    width: 40px;
    margin: 0 2px;
    background: #e8b0ab;
    border-radius: 4px;
}
.alert::after {
    left: 4px;
    width: 32px;
    background: #c42b1c;
}
.task-search {
    width: 219px;
    height: 32px;
    margin: 0 2px 0 4px;
    padding: 0 6px 0 8px;
    background: #eef8f4;
    border: 1px solid #c2dcd1;
    border-radius: 16px;
    font-size: 14px;
}
.task-search span {
    flex: 1;
    padding-left: 10px;
    text-align: left;
    color: #555;
}
.hats {
    width: 46px;
    height: 24px;
}
.tray {
    display: flex;
    align-items: center;
    justify-content: flex-end;
    padding-right: 18px;
}
.tray-btn {
    width: 32px;
    height: 40px;
    font-size: 14px;
}
.wide {
    width: 44px;
}
.tray-status {
    gap: 7px;
    width: 55px;
    height: 40px;
}
.clock {
    justify-content: flex-end;
    width: 72px;
    line-height: 16px;
    text-align: right;
    font-family: "Noto Sans CJK SC", sans-serif;
}
```
